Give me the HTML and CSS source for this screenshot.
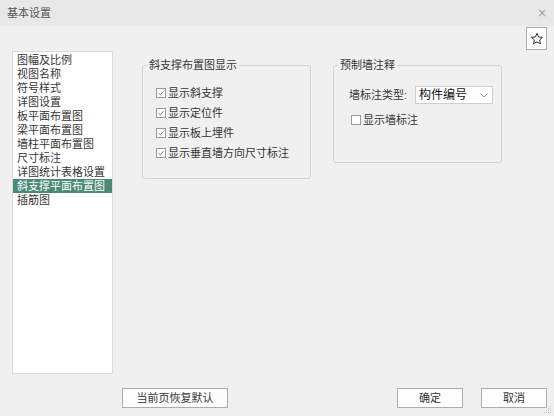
FILE: index.html
```html
<!DOCTYPE html>
<html lang="zh-CN">
<head>
<meta charset="utf-8">
<title>基本设置</title>
<link rel="stylesheet" href="styles.css">
</head>
<body>
<div class="dialog">
  <div class="titlebar">
    <span class="title">基本设置</span>
    <span class="close">×</span>
  </div>
  <div class="body">
    <ul class="list">
      <li class="item">图幅及比例</li>
      <li class="item">视图名称</li>
      <li class="item">符号样式</li>
      <li class="item">详图设置</li>
      <li class="item">板平面布置图</li>
      <li class="item">梁平面布置图</li>
      <li class="item">墙柱平面布置图</li>
      <li class="item">尺寸标注</li>
      <li class="item">详图统计表格设置</li>
      <li class="item selected">斜支撑平面布置图</li>
      <li class="item">插筋图</li>
    </ul>
    <div class="main">
      <fieldset class="group group-brace">
        <legend class="legend">斜支撑布置图显示</legend>
        <label class="check-row"><span class="box checked"><svg viewBox="0 0 10 10" width="10" height="10"><path d="M2 5.2 L4.2 7.3 L8 2.8" fill="none" stroke="#666" stroke-width="1.1"/></svg></span>显示斜支撑</label>
        <label class="check-row"><span class="box checked"><svg viewBox="0 0 10 10" width="10" height="10"><path d="M2 5.2 L4.2 7.3 L8 2.8" fill="none" stroke="#666" stroke-width="1.1"/></svg></span>显示定位件</label>
        <label class="check-row"><span class="box checked"><svg viewBox="0 0 10 10" width="10" height="10"><path d="M2 5.2 L4.2 7.3 L8 2.8" fill="none" stroke="#666" stroke-width="1.1"/></svg></span>显示板上埋件</label>
        <label class="check-row"><span class="box checked"><svg viewBox="0 0 10 10" width="10" height="10"><path d="M2 5.2 L4.2 7.3 L8 2.8" fill="none" stroke="#666" stroke-width="1.1"/></svg></span>显示垂直墙方向尺寸标注</label>
      </fieldset>
      <fieldset class="group group-wall">
        <legend class="legend">预制墙注释</legend>
        <div class="field-row">
          <span class="field-label">墙标注类型:</span>
          <span class="combo"><span class="combo-text">构件编号</span><svg class="chev" viewBox="0 0 8 5" width="8" height="5"><path d="M0.5 0.5 L4 4 L7.5 0.5" fill="none" stroke="#999" stroke-width="1"/></svg></span>
        </div>
        <label class="check-row check-wall"><span class="box"></span>显示墙标注</label>
      </fieldset>
    </div>
    <button class="star-btn" type="button"><svg viewBox="0 0 14 14" width="14" height="14"><path d="M7 1.3 L8.6 5 L12.6 5.3 L9.6 7.9 L10.5 11.9 L7 9.8 L3.5 11.9 L4.4 7.9 L1.4 5.3 L5.4 5 Z" fill="none" stroke="#333" stroke-width="1" stroke-linejoin="round"/></svg></button>
  </div>
  <div class="footer">
    <button class="btn btn-reset" type="button">当前页恢复默认</button>
    <button class="btn btn-ok" type="button">确定</button>
    <button class="btn btn-cancel" type="button">取消</button>
  </div>
  <svg class="grip" viewBox="0 0 8 8" width="8" height="8"><g fill="#c4c4c4"><rect x="6" y="0" width="1" height="1"/><rect x="4" y="2" width="1" height="1"/><rect x="6" y="2" width="1" height="1"/><rect x="2" y="4" width="1" height="1"/><rect x="4" y="4" width="1" height="1"/><rect x="6" y="4" width="1" height="1"/><rect x="0" y="6" width="1" height="1"/><rect x="2" y="6" width="1" height="1"/><rect x="4" y="6" width="1" height="1"/><rect x="6" y="6" width="1" height="1"/></g></svg>
</div>
</body>
</html>
```
FILE: styles.css
```css
* { box-sizing: border-box; }
html, body { margin: 0; padding: 0; }
body {
  width: 554px;
  height: 416px;
  overflow: hidden;
  background: #f0f0f0;
  font-family: "Liberation Sans", "Noto Sans CJK SC", sans-serif;
  font-size: 11px;
  color: #363636;
}
.dialog {
  position: relative;
  width: 554px;
  height: 416px;
  display: flex;
  flex-direction: column;
}
.titlebar {
  height: 26px;
  flex: none;
  background: #e8e8e8;
  display: flex;
  align-items: center;
  justify-content: space-between;
  padding: 0 7px 0 7px;
}
.title {
  font-size: 11px;
  color: #555;
  line-height: 14px;
}
.close {
  font-family: "DejaVu Sans", sans-serif;
  font-size: 12px;
  color: #a0a0a0;
  line-height: 12px;
}
.body {
  display: flex;
  align-items: flex-start;
  height: 348px;
  flex: none;
}
.list {
  list-style: none;
  margin: 25px 0 0 12px;
  padding: 1px 0 0 0;
  width: 101px;
  height: 323px;
  flex: none;
  background: #fff;
  border: 1px solid #dadada;
}
.item {
  height: 14px;
  line-height: 14px;
  padding-left: 4px;
  white-space: nowrap;
  color: #363636;
}
.item.selected {
  background: #4b8a74;
  color: #fff;
}
.main {
  flex: 1;
  display: flex;
  align-items: flex-start;
  gap: 22px;
  margin: 32px 0 0 29px;
}
.group {
  margin: 0;
  width: 169px;
  border: 1px solid #d4d4d4;
  border-radius: 3px;
  padding: 0;
  min-width: 0;
}
.legend {
  margin-left: 4px;
  padding: 0 2px;
  line-height: 14px;
  font-size: 11px;
  color: #363636;
}
.group-brace {
  padding: 11px 0 15px 0;
}
.group-brace .check-row {
  margin-left: 13px;
}
.group-wall {
  padding: 13px 0 32px 0;
}
.check-row {
  display: flex;
  align-items: center;
  height: 20px;
  line-height: 14px;
  white-space: nowrap;
  color: #363636;
}
.box {
  width: 10px;
  height: 10px;
  border: 1px solid #9a9a9a;
  background: #fff;
  margin-right: 2px;
  flex: none;
  display: flex;
  align-items: center;
  justify-content: center;
}
.box svg { display: block; }
.check-wall {
  margin-left: 17px;
  margin-top: 5px;
}
.field-row {
  display: flex;
  align-items: center;
  height: 20px;
  margin-left: 15px;
}
.field-label {
  width: 66px;
  line-height: 14px;
  color: #363636;
  white-space: nowrap;
}
.combo {
  width: 78px;
  height: 18px;
  border: 1px solid #cfcfcf;
  background: #fff;
  display: flex;
  align-items: center;
  justify-content: space-between;
  padding: 0 4px 0 3px;
}
.combo-text {
  font-size: 12px;
  color: #111;
  line-height: 14px;
}
.chev { display: block; }
.star-btn {
  flex: none;
  margin: 1px 7px 0 0;
  width: 21px;
  height: 23px;
  padding: 0;
  border: 1px solid #adadad;
  background: #fff;
  display: flex;
  align-items: center;
  justify-content: center;
}
.star-btn svg { display: block; }
.footer {
  display: flex;
  align-items: center;
  margin-top: 14px;
  padding: 0 7px 0 122px;
  height: 20px;
  flex: none;
}
.btn {
  height: 20px;
  padding: 0;
  border: 1px solid #adadad;
  background: #fdfdfd;
  font-family: "Liberation Sans", "Noto Sans CJK SC", sans-serif;
  font-size: 11px;
  color: #363636;
  line-height: 18px;
}
.btn-reset { width: 106px; }
.btn-ok { width: 66px; margin-left: auto; }
.btn-cancel { width: 66px; margin-left: 18px; }
.grip {
  position: absolute;
  right: 2px;
  bottom: 2px;
}
```
